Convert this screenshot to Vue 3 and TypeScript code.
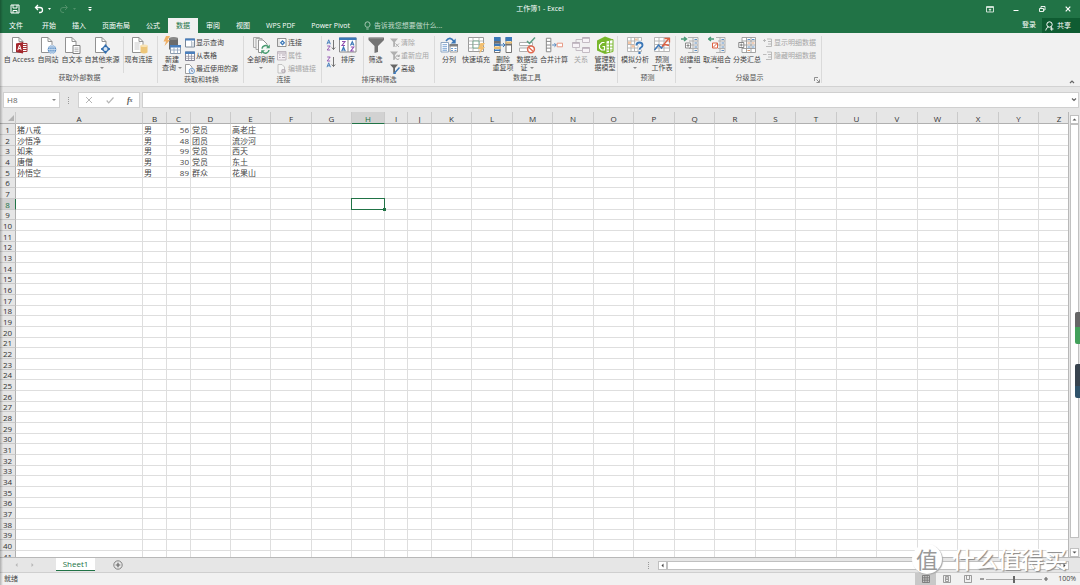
<script setup lang="ts">
import { ref } from 'vue'

interface BigTool {
  icon: string
  lines: string[]
  size?: string
  arrow?: boolean
  disabled?: boolean
  split?: boolean
}
interface SmallTool {
  icon: string
  label: string
  disabled?: boolean
}
interface Group {
  name: string
  size: string
  sorters?: boolean
  launcher?: boolean
  big: BigTool[]
  small: SmallTool[]
}

const tabs: string[] = ['文件', '开始', '插入', '页面布局', '公式', '数据', '审阅', '视图', 'WPS PDF', 'Power Pivot']
const activeTab = ref('数据')

const groups: Group[] = [
  {
    name: '获取外部数据', size: 'g-external',
    big: [
      { icon: 'access', lines: ['自 Access'], size: 'wider' },
      { icon: 'web', lines: ['自网站'] },
      { icon: 'text', lines: ['自文本'] },
      { icon: 'other', lines: ['自其他来源'], size: 'widest', arrow: true },
      { icon: 'existing', lines: ['现有连接'], size: 'wide', split: true },
    ],
    small: [],
  },
  {
    name: '获取和转换', size: 'g-transform',
    big: [{ icon: 'query', lines: ['新建', '查询'], arrow: true }],
    small: [
      { icon: 'showquery', label: '显示查询' },
      { icon: 'table', label: '从表格' },
      { icon: 'recent', label: '最近使用的源' },
    ],
  },
  {
    name: '连接', size: 'g-connect',
    big: [{ icon: 'refresh', lines: ['全部刷新'], size: 'wide', arrow: true }],
    small: [
      { icon: 'connect', label: '连接' },
      { icon: 'props', label: '属性', disabled: true },
      { icon: 'editlink', label: '编辑链接', disabled: true },
    ],
  },
  {
    name: '排序和筛选', size: 'g-sort', sorters: true,
    big: [
      { icon: 'sort', lines: ['排序'] },
      { icon: 'filter', lines: ['筛选'], split: true },
    ],
    small: [
      { icon: 'clear', label: '清除', disabled: true },
      { icon: 'reapply', label: '重新应用', disabled: true },
      { icon: 'advanced', label: '高级' },
    ],
  },
  {
    name: '数据工具', size: 'g-tools',
    big: [
      { icon: 'columns', lines: ['分列'] },
      { icon: 'flash', lines: ['快速填充'], size: 'wide' },
      { icon: 'dedupe', lines: ['删除', '重复项'] },
      { icon: 'validate', lines: ['数据验', '证'], arrow: true },
      { icon: 'merge', lines: ['合并计算'], size: 'wide' },
      { icon: 'relation', lines: ['关系'], disabled: true },
      { icon: 'model', lines: ['管理数', '据模型'] },
    ],
    small: [],
  },
  {
    name: '预测', size: 'g-forecast',
    big: [
      { icon: 'whatif', lines: ['模拟分析'], size: 'wide', arrow: true },
      { icon: 'forecast', lines: ['预测', '工作表'] },
    ],
    small: [],
  },
  {
    name: '分级显示', size: 'g-outline', launcher: true,
    big: [
      { icon: 'group', lines: ['创建组'], arrow: true },
      { icon: 'ungroup', lines: ['取消组合'], size: 'wide', arrow: true },
      { icon: 'subtotal', lines: ['分类汇总'], size: 'wide' },
    ],
    small: [
      { icon: 'showdetail', label: '显示明细数据', disabled: true },
      { icon: 'hidedetail', label: '隐藏明细数据', disabled: true },
    ],
  },
]

const columns: string[] = Array.from('ABCDEFGHIJKLMNOPQRSTUVWXYZ')
const colSize: Record<string, string> = {
  A: 'c-name', B: 'c-tiny', C: 'c-tiny', F: 'c-odd', H: 'c-mid', I: 'c-short', J: 'c-tiny',
  L: 'c-odd', N: 'c-odd', P: 'c-odd', R: 'c-odd', T: 'c-odd', V: 'c-odd', X: 'c-odd', Z: 'c-odd',
}
const records: (string | number)[][] = [
  ['猪八戒', '男', 56, '党员', '高老庄'],
  ['沙悟净', '男', 48, '团员', '流沙河'],
  ['如来', '男', 99, '党员', '西天'],
  ['唐僧', '男', 30, '党员', '东土'],
  ['孙悟空', '男', 89, '群众', '花果山'],
]
const rowCount = 41
const selected = { col: 'H', row: 8 }
const formula = ref('')
const zoom = ref(50)

function cell(row: number, col: number): string | number {
  return records[row - 1]?.[col] ?? ''
}
</script>

<template>
  <svg class="sprite" aria-hidden="true">
    <symbol id="i-page" viewBox="0 0 18 18"><path d="M2.500 1.500h6.500l4 4v11H2.500z" fill="#fff" stroke="#929292" /><path d="M9 1.500v4h4" fill="none" stroke="#929292" /></symbol>
    <symbol id="i-access" viewBox="0 0 18 18">
      <use href="#i-page" width="18" height="18" />
      <path d="M11 7.500h6v8h-6z" fill="#fff" stroke="#a4373a" /><path d="M12 9.500h5M12 11.500h5M12 13.500h5" stroke="#a4373a" />
      <path d="M6 7.500l7-1.500v11.500L6 16z" fill="#a4262c" /><path d="M7.800 14.200L9.500 9 11.200 14.200M8.500 12.500h2" stroke="#fff" fill="none" />
    </symbol>
    <symbol id="i-web" viewBox="0 0 18 18">
      <use href="#i-page" width="18" height="18" />
      <circle cx="13" cy="13.500" r="4.300" fill="#5b8fc7" /><path d="M8.700 13.500h8.600M13 9.200v8.600M9.500 11h7M9.500 16h7" stroke="#dbe8f5" stroke-width=".7" /><ellipse cx="13" cy="13.500" rx="2.200" ry="4.200" fill="none" stroke="#dbe8f5" stroke-width=".7" />
    </symbol>
    <symbol id="i-text" viewBox="0 0 18 18">
      <use href="#i-page" width="18" height="18" />
      <path d="M10 9.500h7v8h-7z" fill="#fff" stroke="#808080" /><path d="M11.500 12h4M11.500 13.700h4M11.500 15.400h4" stroke="#a0a0a0" stroke-width=".8" />
    </symbol>
    <symbol id="i-other" viewBox="0 0 18 18">
      <use href="#i-page" width="18" height="18" />
      <path d="M12.500 8.500L17 13l-4.500 4.500L8 13z" fill="#2f6cae" /><circle cx="12.500" cy="13" r="2" fill="#d9e6f3" /><path d="M12.500 8.500v2M12.500 15.500v2M8 13h2M15 13h2" stroke="#2f6cae" stroke-width="1.500" />
    </symbol>
    <symbol id="i-existing" viewBox="0 0 18 18">
      <use href="#i-page" width="18" height="18" />
      <path d="M4.500 7h6M4.500 9h5M4.500 11h5M4.500 13h5" stroke="#bbb" stroke-width=".8" />
      <path d="M10.500 9.500h7v7q-3.500 2-7 0z" fill="#edc679" /><ellipse cx="14" cy="9.800" rx="3.500" ry="1.300" fill="#f8e3b5" />
    </symbol>
    <symbol id="i-query" viewBox="0 0 18 18">
      <path d="M6 2.500q5-2 9 0v11H6z" fill="#6b6b6b" /><ellipse cx="10.500" cy="2.500" rx="4.500" ry="1.500" fill="#8a8a8a" />
      <path d="M3 0h4L4.500 4H7L1.500 10 3 5.500H.5z" fill="#f0b066" />
      <path d="M7.500 9.500h10v8h-10z" fill="#fff" stroke="#8b9bae" /><path d="M7 9h11v2.500H7z" fill="#4a7fbd" /><path d="M7.500 14h10M11 11.500v6M14.500 11.500v6" stroke="#8aa1bb" stroke-width=".8" />
    </symbol>
    <symbol id="i-showquery" viewBox="0 0 10 10"><path d="M.5 1h9v8h-9z" fill="#fff" stroke="#7a8796" /><path d="M0 .5h10v2H0z" fill="#4a7fbd" /><path d="M6.500 3v6M7 5h2M7 7h2" stroke="#9aa7b5" stroke-width=".7" /></symbol>
    <symbol id="i-table" viewBox="0 0 10 10"><path d="M.5 1h9v8.500h-9z" fill="#fff" stroke="#778" stroke-width=".9" /><path d="M0 .5h10v2.500H0z" fill="#4a7fbd" /><path d="M0 5.300h10M0 7.300h10M3.500 3v6.500M6.500 3v6.500" stroke="#889" stroke-width=".7" /></symbol>
    <symbol id="i-recent" viewBox="0 0 10 10"><path d="M.5.5h4l2.500 2.500v6.500H.5z" fill="#fff" stroke="#888" stroke-width=".8" /><circle cx="6.800" cy="7" r="2.700" fill="#eaf2fb" stroke="#5b8fc7" stroke-width=".8" /><path d="M6.700 5.500V7.200H8" stroke="#446" stroke-width=".6" fill="none" /></symbol>
    <symbol id="i-refresh" viewBox="0 0 18 18">
      <path d="M1.500 1.500h6v10h-6z" fill="#eee" stroke="#aaa" /><path d="M4 2.500h6v11H4z" fill="#f4f4f4" stroke="#aaa" /><path d="M6.500 4h4.500l4 4v8.500H6.500z" fill="#fff" stroke="#929292" /><circle cx="13.500" cy="13.300" r="4.700" fill="#f3f7f4" />
      <path d="M10 12.700a3.600 3.600 0 0 1 6.200-2M17 14a3.600 3.600 0 0 1-6.200 2" stroke="#4a9c72" stroke-width="1.500" fill="none" /><path d="M17.800 8.500v3.700h-3.700zM9.200 18v-3.700h3.700z" fill="#4a9c72" />
    </symbol>
    <symbol id="i-connect" viewBox="0 0 10 10"><path d="M.5.500h8.500v8H.5z" fill="#fff" stroke="#777" stroke-width=".8" /><path d="M2 .8v7.500" stroke="#aaa" stroke-width=".6" /><path d="M5.500 2l2.700 2.700-2.700 2.700-2.700-2.700z" fill="#3c78b8" /><circle cx="5.500" cy="4.700" r=".8" fill="#fff" /></symbol>
    <symbol id="i-props" viewBox="0 0 10 10"><path d="M.5.500h8.500v8.500H.5z" fill="#f4f0f4" stroke="#b5acb5" stroke-width=".8" /><path d="M.5 2h8.500M2 4h1.500M2 6.500h1.500M5 4h3M5 6.500h3" stroke="#b5acb5" /></symbol>
    <symbol id="i-editlink" viewBox="0 0 10 10"><path d="M1 .5h4l2.500 2.500v6H1z" fill="#f6f6f6" stroke="#b8b8b8" stroke-width=".8" /><path d="M4 7h5M5 5.500h3v3H5z" stroke="#b5acb5" fill="none" stroke-width=".8" /></symbol>
    <symbol id="i-sort" viewBox="0 0 18 18">
      <path d="M.5 2h16.500v14H.5z" fill="#fff" stroke="#8a8a8a" /><path d="M0 1.500h17.500v2.500H0z" fill="#3c78b8" /><path d="M9 4v12" stroke="#8a8a8a" />
      <path d="M3 5.500h3L3 9.500h3M11.800 11h3l-3 4h3" fill="none" stroke="#8f4fb0" stroke-width="1.100" /><path d="M2.700 15.200L4.500 11l1.800 4.200M3.300 14h2.400M11.500 9.500l1.800-4L15 9.500M12.200 8.200h2.200" fill="none" stroke="#3c78b8" stroke-width="1.100" />
    </symbol>
    <symbol id="i-az" viewBox="0 0 10 12"><path d="M1 5.200L2.700.8l1.700 4.400M1.600 3.800h2.200" fill="none" stroke="#3c78b8" stroke-width=".9" /><path d="M1.200 7h3l-3 4h3" fill="none" stroke="#8f4fb0" stroke-width=".9" /><path d="M7.500 1v9.500M5.800 8.500l1.700 2 1.700-2" fill="none" stroke="#666" stroke-width=".9" /></symbol>
    <symbol id="i-za" viewBox="0 0 10 12"><path d="M1 11.200l1.700-4.400 1.700 4.400M1.600 9.800h2.200" fill="none" stroke="#3c78b8" stroke-width=".9" /><path d="M1.200 1h3l-3 4h3" fill="none" stroke="#8f4fb0" stroke-width=".9" /><path d="M7.500 1v9.500M5.800 8.500l1.700 2 1.700-2" fill="none" stroke="#666" stroke-width=".9" /></symbol>
    <symbol id="i-filter" viewBox="0 0 18 18"><path d="M1.500 1.500h15.500v2.500L11 10v6l-3.500 1v-7L1.500 4z" fill="#747474" /><path d="M2.500 2h13.500" stroke="#9a9a9a" /></symbol>
    <symbol id="i-clear" viewBox="0 0 10 10"><path d="M0 .5h8L5 4v4.500L3.200 9V4z" fill="#b0b0b0" /><path d="M5.500 5.500l3.500 3.500M9 5.500L5.500 9" stroke="#b0b0b0" /></symbol>
    <symbol id="i-reapply" viewBox="0 0 10 10"><path d="M0 .5h8L5 4v4.500L3.200 9V4z" fill="#b0b0b0" /><path d="M9 5a2 2 0 1 0 .3 2.500M9.300 3.700V5.500H7.500" stroke="#a8a8a8" fill="none" /></symbol>
    <symbol id="i-advanced" viewBox="0 0 10 10"><path d="M0 .5h8L5 4v4.500L3.200 9V4z" fill="#666" /><path d="M9.500 3.500L5 8.500l-1 1.200 1.800-.4" stroke="#3c78b8" stroke-width="1.400" fill="none" /></symbol>
    <symbol id="i-columns" viewBox="0 0 18 18">
      <path d="M6 5q4-5.500 8 .5" fill="none" stroke="#3c78b8" stroke-width="1.600" /><path d="M15.700 2.500v5h-5z" fill="#3c78b8" />
      <path d="M1 6.500h7.500v9.500H1z" fill="#fff" stroke="#8fa6c0" /><path d="M2.500 8.700h4.500M2.500 10.700h4.500M2.500 12.700h4.500M2.500 14.300h4.500" stroke="#6d9bd0" stroke-width=".9" />
      <path d="M10 8.500h7.500v7.500H10z" fill="#fff" stroke="#999" /><path d="M9.500 8h8.500v2.500H9.500z" fill="#808080" /><path d="M11 12.500h2M14.500 12.500h2M11 14.500h2M14.500 14.500h2" stroke="#6d9bd0" />
    </symbol>
    <symbol id="i-flash" viewBox="0 0 18 18"><path d="M1.500 1.500h15v14h-15z" fill="#fff" stroke="#9a9a9a" /><path d="M1.500 5h15M1.500 8.500h15M1.500 12h15M6 1.500v14M12 1.500v14" stroke="#aaa" stroke-width=".8" /><path d="M6 5h6v7H6z" fill="#fff" stroke="#5f9d7b" stroke-width=".8" /><path d="M6 8.500h6" stroke="#aaa" stroke-width=".8" /><path d="M13.500 7H18l-2.500 4H18l-6 7 1.500-5H11z" fill="#f3bf70" /></symbol>
    <symbol id="i-dedupe" viewBox="0 0 18 18"><path d="M.5 1.500h5.500v15H.5zM12 1.500h5.500v15H12z" fill="#fff" stroke="#666" stroke-width=".9" /><path d="M0 1h6.500v4H0zM0 7.500h6.500v2.500H0zM11.500 1H18v4h-6.500z" fill="#3c78b8" /><path d="M0 5h6.500v2.500H0zM11.500 7.500H18v2h-6.500z" fill="#707070" /><path d="M0 10.500h6.500v2.500H0zM11.500 5.500H18v2h-6.500z" fill="#e7bd73" /><path d="M0 13.500h6.500v1.500H0z" fill="#3c78b8" /><path d="M7 9h4M9 7l2 2-2 2" stroke="#3c78b8" fill="none" /></symbol>
    <symbol id="i-validate" viewBox="0 0 18 18"><path d="M1.500 6.500h13v3h-13zM1.500 12h8v3.500h-8z" fill="#fff" stroke="#b0b0b0" /><path d="M9 5l2.500 2.500L17 1.500" stroke="#5b9e83" stroke-width="1.500" fill="none" /><circle cx="13" cy="13.300" r="3.400" fill="#fff" stroke="#e06a50" stroke-width="1.500" /><path d="M10.700 11.200l4.600 4.200" stroke="#e06a50" stroke-width="1.300" /></symbol>
    <symbol id="i-merge" viewBox="0 0 20 18"><path d="M1.500 1.500h5v15h-5zM1.500 5h5M1.500 9h5M1.500 12.500h5" fill="#fff" stroke="#808080" /><path d="M8 9h4M10.500 7l2 2-2 2" stroke="#3c78b8" fill="none" /><path d="M13.500 7h6v4h-6z" fill="#fff" stroke="#e58c75" /></symbol>
    <symbol id="i-relation" viewBox="0 0 18 18"><path d="M.5 6.500h7v5h-7zM10.500 1.500h7v5h-7zM10.500 11.500h7v5h-7z" fill="#f7f3f7" stroke="#c4bcc4" /><path d="M.5 7h7M10.500 2h7M10.500 12h7" stroke="#b8adb8" stroke-width="1.600" /><path d="M4 6V3.500h6M4 12v2.500h6" stroke="#c4bcc4" fill="none" /></symbol>
    <symbol id="i-model" viewBox="0 0 18 18"><path d="M1 4.500L9 .5l8 3v11.500l-8 3-8-3.500z" fill="#78b72c" /><path d="M10 5l7-1.500v12l-7 1.500z" fill="#fff" stroke="#78b72c" /><path d="M10.500 8h6.500M10.500 11h6.500M10.500 14h6.500M13.500 4.500v12" stroke="#78b72c" stroke-width=".9" /><path d="M8.500 6.500H6L3.500 9v3L5.500 14h3v-3.500H6.500" fill="none" stroke="#fff" stroke-width="1.200" /></symbol>
    <symbol id="i-whatif" viewBox="0 0 18 18"><path d="M1.500 1.500h14v14h-14zM1.500 5h14M1.500 8.500h14M1.500 12h14M5 1.500v14M8.500 1.500v14M12 1.500v14" fill="#fff" stroke="#b0b0b0" stroke-width=".9" /><path d="M2 5.500h3v2.500H2zM5.500 9h3v2.500h-3zM9 2.500h2.500v2H9z" fill="#f5c5a3" /><path d="M10.500 9.500q0-3 3-3t3 2.700q0 1.500-1.500 2.300t-1.500 2.500" stroke="#f4f4f4" stroke-width="4" fill="none" /><path d="M10.500 9.500q0-3 3-3t3 2.700q0 1.500-1.500 2.300t-1.500 2.300" stroke="#3c78b8" stroke-width="1.900" fill="none" /><path d="M12.400 15.700h2.200V18h-2.200z" fill="#3c78b8" /></symbol>
    <symbol id="i-forecast" viewBox="0 0 18 18"><path d="M1.500 1.500h15v14h-15zM1.500 5h15M1.500 8.500h15M1.500 12h15M6 1.500v14M11 1.500v14" fill="#fff" stroke="#b0b0b0" stroke-width=".9" /><path d="M1.500 14l4-5 3 3 2-3" stroke="#3c78b8" stroke-width="1.500" fill="none" /><path d="M9 10.500L15.500 3M9 10.500l3-2 4 1M11.500 2.500H16.500v4" stroke="#dc6243" stroke-width="1.300" fill="none" /></symbol>
    <symbol id="i-group" viewBox="0 0 18 18"><path d="M0 3h5M3 1l2.500 2L3 5" stroke="#4a9a78" stroke-width="1.400" fill="none" /><path d="M7 1.500h10v15H7M12 1.500v15M8 5h9M8 9h9M8 12.500h9" stroke="#aaa" fill="none" stroke-width=".9" /><path d="M4.500 7h5v5h-5zM5.500 9.500h3M7 8v3" fill="#fff" stroke="#808080" stroke-width=".9" /><path d="M13.500 3.500h2.500M13.500 7h2.500M13.500 11h2.500M13.500 14.500h2.500" stroke="#5b8fc7" /></symbol>
    <symbol id="i-ungroup" viewBox="0 0 18 18"><path d="M6 3H1M3 1L.5 3 3 5" stroke="#4a9a78" stroke-width="1.400" fill="none" /><path d="M8 1.500h9v15H8M12 1.500v15M10 5h7M10 9h7M10 12.500h7" stroke="#aaa" fill="none" stroke-width=".9" /><path d="M4.500 7h5v5h-5zM5 11.500L9.500 7" fill="#fff" stroke="#dc6243" /><path d="M13.500 3.500h2.500M13.500 7h2.500M13.500 11h2.500M13.500 14.500h2.500" stroke="#5b8fc7" /></symbol>
    <symbol id="i-subtotal" viewBox="0 0 18 18"><path d="M4 1.500h13.500v15H4zM8.500 1.500v15M13 1.500v15M4 5h13.500M4 9h13.500M4 12.500h13.500" stroke="#9a9a9a" fill="#fff" stroke-width=".9" /><path d="M.8 6.500h5v5h-5zM1.800 9h3M3.300 7.500v3" fill="#fff" stroke="#777" stroke-width=".9" /><path d="M9.500 3.500h2.500M14 3.500h2.500M9.500 11h2.500M14 11h2.500" stroke="#5b8fc7" /><path d="M9.500 7h2.500M14 7h2.500M9.500 14.500h2.500" stroke="#e39a6b" /></symbol>
    <symbol id="i-showdetail" viewBox="0 0 10 10"><path d="M0 2.500h3M1.500 1v3M4 1h4.500v7.500H3M5 3.500h3.500M5 6h3.500" stroke="#b4b4b4" fill="none" stroke-width=".9" /></symbol>
    <symbol id="i-hidedetail" viewBox="0 0 10 10"><path d="M0 3.500h3.500M4 1h4.500v7.500H3M5 3.500h3.500M5 6h3.500" stroke="#b4b4b4" fill="none" stroke-width=".9" /></symbol>
  </svg>

  <div class="excel">
    <header class="title-bar">
      <div class="quick">
        <button type="button" aria-label="保存"><svg width="10" height="10" viewBox="0 0 10 10"><path d="M1 1h8v8H1zM3 1v3h4V1M3 9V6.500h4V9" fill="none" stroke="#fff" /></svg></button>
        <button type="button" aria-label="撤消"><svg width="18" height="10" viewBox="0 0 18 10"><path d="M1.500 3.500h4.500a2.500 2.500 0 0 1 0 5H5M4 1L1.500 3.500 4 6" fill="none" stroke="#fff" stroke-width="1.300" /><path d="M14 4h3l-1.500 2z" fill="#fff" /></svg></button>
        <button type="button" aria-label="恢复" disabled><svg width="18" height="10" viewBox="0 0 18 10"><path d="M8 3.500H4a2.500 2.500 0 0 0 0 5h1M6 1l2.500 2.500L6 6" fill="none" stroke="#4f9069" /><path d="M14 4h3l-1.500 2z" fill="#4f9069" /></svg></button>
        <button type="button" aria-label="自定义快速访问工具栏"><svg width="6" height="10" viewBox="0 0 6 10"><path d="M1.500 3.500h3" stroke="#fff" /><path d="M1.200 5h3.600L3 7.200z" fill="#fff" /></svg></button>
      </div>
      <h1>工作簿1 - Excel</h1>
      <div class="window-buttons">
        <button type="button" aria-label="功能区显示选项"><svg width="8" height="8" viewBox="0 0 8 8"><path d="M.5 1.500h7v5.500h-7zM.5 2.500h7" fill="none" stroke="#dcebe2" stroke-width=".9" /><path d="M4 6.500V4M2.800 5L4 3.800 5.200 5" fill="none" stroke="#fff" stroke-width=".8" /></svg></button>
        <button type="button" aria-label="最小化"><svg width="8" height="8" viewBox="0 0 8 8"><path d="M1.500 5.500h5" stroke="#fff" /></svg></button>
        <button type="button" aria-label="还原"><svg width="8" height="8" viewBox="0 0 8 8"><path d="M1.500 3.500h4v3h-4zM3 3V1.500h4v3.500H6" fill="none" stroke="#fff" stroke-width=".9" /></svg></button>
        <button type="button" aria-label="关闭"><svg width="8" height="8" viewBox="0 0 8 8"><path d="M1.700 1.700l4.600 4.600M6.300 1.700L1.700 6.300" stroke="#fff" stroke-width="1.200" /></svg></button>
      </div>
    </header>

    <nav class="tab-bar">
      <button v-for="t in tabs" :key="t" type="button" class="tab" :class="{ active: t === activeTab }" @click="activeTab = t">{{ t }}</button>
      <button type="button" class="tell-me">
        <svg width="7" height="9" viewBox="0 0 7 9"><path d="M2.300 6.200Q1 5 1 3.300a2.500 2.500 0 0 1 5 0Q6 5 4.700 6.200zM2.300 8h2.400" fill="none" stroke="#c5dccd" stroke-width=".8" /></svg>
        告诉我您想要做什么...
      </button>
      <button type="button" class="sign-in">登录</button>
      <button type="button" class="share">
        <svg width="9" height="10" viewBox="0 0 9 10"><circle cx="4.500" cy="3.500" r="2.700" fill="none" stroke="#fff" /><path d="M.7 9.500Q1 6.500 3.500 6.200M5.500 6.200L7 7M6.700 6.500v3.200M5 8h3.500" fill="none" stroke="#fff" stroke-width=".9" /></svg>
        共享
      </button>
    </nav>

    <div class="ribbon">
      <section v-for="g in groups" :key="g.name" class="group" :class="g.size">
        <div class="tools">
          <div v-if="g.sorters" class="sorters">
            <button type="button" aria-label="升序"><svg width="10" height="12"><use href="#i-az" /></svg></button>
            <button type="button" aria-label="降序"><svg width="10" height="12"><use href="#i-za" /></svg></button>
          </div>
          <button v-for="b in g.big" :key="b.icon" type="button" class="big" :class="[b.size, { split: b.split }]" :disabled="b.disabled">
            <svg width="18" height="18"><use :href="'#i-' + b.icon" /></svg>
            <span v-for="(l, i) in b.lines" :key="l" class="line">{{ l }}<i v-if="b.arrow && i === 1" class="caret"></i></span>
            <i v-if="b.arrow && b.lines.length === 1" class="caret below"></i>
          </button>
          <div v-if="g.small.length" class="small-list">
            <button v-for="s in g.small" :key="s.icon" type="button" class="small" :disabled="s.disabled">
              <svg width="10" height="10"><use :href="'#i-' + s.icon" /></svg>{{ s.label }}
            </button>
          </div>
        </div>
        <h2>{{ g.name }}</h2>
        <button v-if="g.launcher" type="button" class="launcher" aria-label="分级显示设置"><svg width="6" height="6" viewBox="0 0 6 6"><path d="M.5 4V.5H4M2.500 2.500L5 5M5.500 2.500v3h-3" fill="none" stroke="#777" stroke-width=".8" /></svg></button>
      </section>
      <button type="button" class="collapse" aria-label="折叠功能区"><svg width="6" height="5" viewBox="0 0 6 5"><path d="M1 4l2-2 2 2" fill="none" stroke="#666" stroke-width="1.200" /></svg></button>
    </div>

    <div class="formula-bar">
      <button type="button" class="name-box">H8<i class="caret"></i></button>
      <span class="grip"></span>
      <div class="fx">
        <button type="button" aria-label="取消" disabled><svg width="8" height="8" viewBox="0 0 8 8"><path d="M1 1l6 6M7 1L1 7" stroke="#b5b5b5" /></svg></button>
        <button type="button" aria-label="输入" disabled><svg width="8" height="8" viewBox="0 0 8 8"><path d="M.7 4.500l2 2.300L7.500 1.500" fill="none" stroke="#b5b5b5" stroke-width="1.200" /></svg></button>
        <button type="button" aria-label="插入函数" class="fn">f<sub>x</sub></button>
      </div>
      <div class="formula">
        <input v-model="formula" type="text" aria-label="编辑栏">
        <svg width="8" height="6" viewBox="0 0 8 6"><path d="M2 1.500l2 2 2-2" fill="none" stroke="#666" stroke-width="1.200" /></svg>
      </div>
    </div>

    <main class="workbook">
      <div class="grid">
        <table>
          <colgroup>
            <col class="c-head">
            <col v-for="c in columns" :key="c" :class="colSize[c]">
          </colgroup>
          <thead>
            <tr>
              <th class="corner"><svg width="8" height="8" viewBox="0 0 8 8"><path d="M7 1v6H1z" fill="#b2b2b2" /></svg></th>
              <th v-for="c in columns" :key="c" scope="col" :class="{ picked: c === selected.col }">{{ c }}</th>
            </tr>
          </thead>
          <tbody>
            <tr v-for="r in rowCount" :key="r">
              <th scope="row" :class="{ picked: r === selected.row }">{{ r }}</th>
              <td v-for="(c, i) in columns" :key="c" :class="{ num: i === 2, current: r === selected.row && c === selected.col }">{{ cell(r, i) }}</td>
            </tr>
          </tbody>
        </table>
      </div>
      <div class="v-scroll">
        <button type="button" aria-label="向上滚动"><svg width="7" height="7" viewBox="0 0 7 7"><path d="M1.500 4.500h4l-2-2z" fill="#555" /></svg></button>
        <div class="v-thumb"></div>
        <button type="button" aria-label="向下滚动"><svg width="7" height="7" viewBox="0 0 7 7"><path d="M1.500 2.500h4l-2 2z" fill="#555" /></svg></button>
      </div>
    </main>

    <div class="sheet-bar">
      <div class="sheet-nav">
        <button type="button" aria-label="上一张" disabled><svg width="5" height="6" viewBox="0 0 5 6"><path d="M3.500 1v4L1.500 3z" fill="#b5b5b5" /></svg></button>
        <button type="button" aria-label="下一张" disabled><svg width="5" height="6" viewBox="0 0 5 6"><path d="M1.500 1v4l2-2z" fill="#b5b5b5" /></svg></button>
      </div>
      <button type="button" class="sheet">Sheet1</button>
      <button type="button" class="add" aria-label="新工作表"><svg width="10" height="10" viewBox="0 0 10 10"><circle cx="5" cy="5" r="4.200" fill="none" stroke="#777" stroke-width=".9" /><path d="M5 2.700v4.600M2.700 5h4.600" stroke="#666" stroke-width="1.200" /></svg></button>
      <span class="grip"></span>
      <div class="h-scroll">
        <button type="button" aria-label="向左滚动"><svg width="7" height="7" viewBox="0 0 7 7"><path d="M4.500 1.500v4l-2-2z" fill="#444" /></svg></button>
        <div class="h-thumb"></div>
        <button type="button" aria-label="向右滚动"><svg width="7" height="7" viewBox="0 0 7 7"><path d="M2.500 1.500v4l2-2z" fill="#444" /></svg></button>
      </div>
    </div>

    <footer class="status">
      <span class="ready">就绪</span>
      <button type="button" class="view on" aria-label="普通"><svg width="8" height="8" viewBox="0 0 8 8"><path d="M.5.500h7v7h-7zM.5 2.800h7M.5 5.200h7M2.800.5v7M5.200.5v7" fill="none" stroke="#777" stroke-width=".9" /></svg></button>
      <button type="button" class="view" aria-label="页面布局"><svg width="8" height="8" viewBox="0 0 8 8"><path d="M.5.500h7v7h-7zM2.500 1.500h3v5h-3zM3 3h2M3 4.500h2" fill="none" stroke="#888" stroke-width=".8" /></svg></button>
      <button type="button" class="view" aria-label="分页预览"><svg width="8" height="8" viewBox="0 0 8 8"><path d="M.5.500h7v7h-7zM2.500.5v4h3v-4" fill="none" stroke="#888" stroke-width=".8" /></svg></button>
      <button type="button" class="step" aria-label="缩小"><svg width="6" height="6" viewBox="0 0 6 6"><path d="M1 3h4" stroke="#666" stroke-width="1.200" /></svg></button>
      <input v-model="zoom" type="range" min="0" max="100" aria-label="缩放">
      <button type="button" class="step" aria-label="放大"><svg width="6" height="6" viewBox="0 0 6 6"><path d="M1 3h4M3 1v4" stroke="#666" stroke-width="1.200" /></svg></button>
      <span class="percent">100%</span>
    </footer>

    <div class="edge-meter"></div>
    <div class="edge-panel"></div>
    <div class="watermark"><span class="seal">值</span><span class="brand">什么值得买</span></div>
  </div>
</template>

<style>
body {
  margin: 0;
  overflow: hidden;
}
</style>

<style scoped>
.sprite {
  position: absolute;
  width: 0;
  height: 0;
}
.excel {
  position: relative;
  display: flex;
  flex-direction: column;
  height: 100vh;
  overflow: hidden;
  background: #e6e6e6;
  color: #444;
  font-family: "Open Sans", "Noto Sans CJK SC", sans-serif;
  font-size: 7px;
  line-height: 8px;
}
.excel::before {
  content: "";
  position: absolute;
  inset: 0 auto 0 0;
  z-index: 3;
  width: 3px;
  background: linear-gradient(to right, rgba(0, 0, 0, 0.25), rgba(0, 0, 0, 0));
}
button {
  display: flex;
  align-items: center;
  justify-content: center;
  margin: 0;
  padding: 0;
  border: 0;
  background: none;
  color: inherit;
  font: inherit;
  white-space: nowrap;
}
svg {
  display: block;
  flex: none;
}
.caret {
  width: 0;
  height: 0;
  border: 2px solid transparent;
  border-top-color: #888;
  border-bottom: 0;
}

.title-bar {
  display: grid;
  grid-template-columns: 1fr auto 1fr;
  align-items: center;
  flex: none;
  height: 17px;
  background: #217346;
  color: #fff;
}
.title-bar h1 {
  margin: 0;
  font-size: 7px;
  font-weight: 400;
}
.quick {
  display: flex;
  gap: 7px;
  padding-left: 10px;
}
.quick button:first-child {
  margin-right: 7px;
}
.quick button:last-child {
  margin-left: 3px;
}
.window-buttons {
  display: flex;
  justify-content: flex-end;
  gap: 18px;
  padding-right: 8px;
}

.tab-bar {
  display: flex;
  flex: none;
  height: 16px;
  background: #217346;
  color: #fff;
}
.tab {
  padding: 1px 8px 0;
}
.tab:first-child {
  padding-left: 9px;
  padding-right: 11px;
}
.tab.active {
  height: 15px;
  margin-top: 1px;
  padding-top: 0;
  background: #f1f1f1;
  color: #217346;
}
.tell-me {
  gap: 3px;
  margin-left: 6px;
  padding-top: 1px;
  color: #c5dccd;
}
.sign-in {
  margin-left: auto;
  padding-right: 6px;
}
.share {
  gap: 3px;
  height: 15px;
  margin-top: 1px;
  padding: 0 9px 0 3px;
  background: #0f5c32;
}

.ribbon {
  position: relative;
  display: flex;
  flex: none;
  box-sizing: border-box;
  height: 54px;
  border-bottom: 1px solid #d2d2d2;
  background: #f1f1f1;
}
.group {
  position: relative;
  display: flex;
  flex-direction: column;
  box-sizing: border-box;
  margin: 3px 0;
  padding-left: 2px;
  border-right: 1px solid #dadada;
}
.g-external { width: 158px; }
.g-transform { width: 86px; }
.g-connect { width: 78px; }
.g-sort { width: 113px; }
.g-tools { width: 183px; }
.g-forecast { width: 58px; }
.g-outline { width: 146px; }
.tools {
  display: flex;
  height: 39px;
}
.group h2 {
  margin: 0;
  color: #555;
  font-size: 7px;
  font-weight: 400;
  line-height: 10px;
  text-align: center;
}
.big {
  flex-direction: column;
  justify-content: flex-start;
  box-sizing: border-box;
  width: 24px;
}
.big svg {
  margin-bottom: 2px;
}
.big.wide { width: 30px; }
.big.wider { width: 34px; }
.big.widest { width: 36px; }
.big.split {
  margin-left: 3px;
  border-left: 1px solid #dadada;
}
.big .line {
  display: flex;
  align-items: center;
  gap: 2px;
}
.below {
  margin-top: 3px;
}
button:disabled {
  color: #a6a6a6;
}
.small-list {
  display: flex;
  flex-direction: column;
  padding-left: 1px;
}
.g-sort .small-list {
  padding-left: 3px;
}
.small {
  justify-content: flex-start;
  gap: 1px;
  height: 13px;
}
.sorters {
  display: flex;
  flex-direction: column;
  gap: 5px;
  padding: 3px 0 0 2px;
}
.launcher {
  position: absolute;
  right: 1px;
  bottom: 0;
}
.collapse {
  position: absolute;
  right: 5px;
  bottom: 2px;
}

.formula-bar {
  display: flex;
  flex: none;
  align-items: center;
  height: 16px;
  padding: 5px 1px 4px 3px;
}
.name-box,
.fx,
.formula {
  box-sizing: border-box;
  height: 16px;
  border: 1px solid #d0d0d0;
  background: #fff;
}
.name-box {
  justify-content: space-between;
  width: 57px;
  padding: 0 3px;
  font-size: 8px;
  color: #666;
}
.grip {
  width: 1px;
  height: 7px;
  margin: 0 8px;
  border-left: 1px dotted #999;
}
.fx {
  display: flex;
  align-items: center;
  justify-content: space-around;
  width: 62px;
  margin-right: 2px;
}
.fn {
  color: #555;
  font: italic 700 8px "Liberation Serif", serif;
}
.fn sub {
  font-size: 6px;
}
.formula {
  display: flex;
  flex: 1;
  align-items: center;
}
.formula input {
  flex: 1;
  min-width: 0;
  height: 12px;
  padding: 0 3px;
  border: 0;
  outline: 0;
  background: none;
  font: inherit;
}

.workbook {
  display: flex;
  flex: 1;
  min-height: 0;
}
.grid {
  flex: 1;
  min-width: 0;
  overflow: hidden;
  border-right: 1px solid #b8b8b8;
}
table {
  width: 1080px;
  table-layout: fixed;
  border-collapse: separate;
  border-spacing: 0;
  font-size: 8px;
  line-height: 9px;
}
col { width: 40px; }
.c-head { width: 16px; }
.c-name { width: 127px; }
.c-tiny { width: 24px; }
.c-short { width: 23px; }
.c-mid { width: 33px; }
.c-odd { width: 41px; }
th,
td {
  box-sizing: border-box;
  overflow: hidden;
  padding: 0;
  white-space: nowrap;
}
thead th {
  height: 12px;
  padding-top: 1px;
  border-right: 1px solid #cacaca;
  border-bottom: 1px solid #b0b0b0;
  background: #e6e6e6;
  color: #333;
  font-weight: 400;
}
.corner svg {
  margin-left: 7px;
}
thead th.picked {
  border-bottom-color: #217346;
  background: #d2d2d2;
  color: #217346;
}
tbody th {
  border-right: 1px solid #b0b0b0;
  border-bottom: 1px solid #cacaca;
  background: #e6e6e6;
  color: #333;
  font-weight: 400;
  text-align: center;
}
tbody th.picked {
  border-right-color: #217346;
  background: #d2d2d2;
  color: #217346;
}
tbody tr {
  height: 11px;
}
tbody tr:nth-child(3n) {
  height: 10px;
  line-height: 8px;
}
td {
  padding-left: 1px;
  border-right: 1px solid #dedede;
  border-bottom: 1px solid #dedede;
  background: #fff;
  color: #444;
}
td.num {
  padding-right: 1px;
  text-align: right;
}
td.current {
  position: relative;
  z-index: 1;
  overflow: visible;
}
td.current::before {
  content: "";
  position: absolute;
  inset: -1px;
  border: 1px solid #217346;
}
td.current::after {
  content: "";
  position: absolute;
  right: -2px;
  bottom: -2px;
  width: 3px;
  height: 3px;
  background: #217346;
}
.v-scroll {
  display: flex;
  flex-direction: column;
  width: 9px;
  padding: 3px 1px 0;
}
.v-scroll button,
.v-thumb,
.h-scroll button,
.h-thumb {
  border: 1px solid #c0c0c0;
  background: #fff;
}
.v-thumb {
  flex: 1;
  margin-bottom: 10px;
}

.sheet-bar {
  display: flex;
  flex: none;
  align-items: center;
  box-sizing: border-box;
  height: 16px;
  padding-right: 11px;
  border-top: 1px solid #b8b8b8;
  border-bottom: 1px solid #cfcfcf;
}
.sheet-nav {
  display: flex;
  gap: 11px;
  width: 42px;
  padding-left: 14px;
}
.sheet {
  box-sizing: border-box;
  align-self: flex-start;
  width: 39px;
  height: 13px;
  border-bottom: 1px solid #217346;
  background: #fff;
  color: #217346;
  font-size: 8px;
}
.add {
  margin-left: 18px;
}
.sheet-bar .grip {
  margin-left: auto;
}
.h-scroll {
  display: flex;
  width: 38%;
  min-width: 411px;
}
.h-thumb {
  flex: 1;
}

.status {
  display: flex;
  flex: none;
  align-items: center;
  height: 12px;
  padding: 0 4px;
  background: #f1f1f1;
}
.ready {
  margin-right: auto;
}
.view {
  width: 21px;
  height: 12px;
}
.view.on {
  background: #c8c8c8;
}
.step {
  width: 8px;
}
.status input {
  width: 56px;
  height: 8px;
  margin: 0;
  appearance: none;
  background: linear-gradient(#a8a8a8, #a8a8a8) center / 100% 1px no-repeat;
}
.status input::-webkit-slider-thumb {
  appearance: none;
  width: 2px;
  height: 7px;
  background: #666;
}
.percent {
  margin-left: 8px;
}

.edge-meter,
.edge-panel {
  position: absolute;
  right: 0;
  z-index: 2;
  width: 5px;
  border-radius: 2px 0 0 2px;
}
.edge-meter {
  top: 312px;
  height: 32px;
  background: linear-gradient(#666 48%, #42a05a 48%);
}
.edge-panel {
  top: 364px;
  height: 34px;
  background: linear-gradient(#38434e 65%, #2f526a 65%);
}
.watermark {
  position: absolute;
  right: 13px;
  bottom: 11px;
  z-index: 4;
  display: flex;
  align-items: center;
  gap: 10px;
  pointer-events: none;
}
.seal {
  width: 30px;
  height: 30px;
  border-radius: 50%;
  background: #fff;
  box-shadow: 1px 1px 1px #aaa;
  color: #999;
  font-size: 22px;
  line-height: 30px;
  text-align: center;
}
.brand {
  color: #fff;
  font-size: 23px;
  font-weight: 500;
  line-height: 28px;
  text-shadow: 1px 1px 1px #888;
}
</style>
